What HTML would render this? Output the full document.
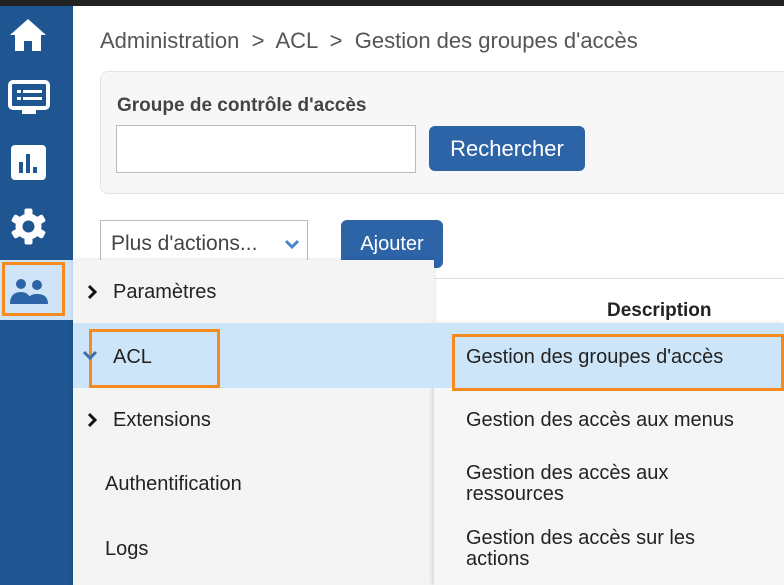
<!DOCTYPE html>
<html><head><meta charset="utf-8"><style>
*{box-sizing:border-box;margin:0;padding:0}
body{width:784px;height:585px;overflow:hidden;background:#fff;font-family:"Liberation Sans",sans-serif;position:relative;color:#222}
.a{position:absolute}
.side{left:0;top:6px;width:73px;height:579px;background:#1f5590}
.t{font-size:20px;white-space:nowrap}
</style></head><body>
<div class="a" style="left:0;top:0;width:784px;height:6px;background:#222"></div>
<div class="a side"></div>
<svg class="a" style="left:9px;top:18px" width="38" height="34" viewBox="0 0 38 34"><path d="M19 1 L37 17 H32 V33 H23 V23 H15 V33 H6 V17 H1 Z" fill="#fff"/></svg>
<svg class="a" style="left:8px;top:80px" width="42" height="36" viewBox="0 0 42 36"><rect x="2" y="2" width="38" height="26" rx="3" fill="none" stroke="#fff" stroke-width="4"/><rect x="14" y="28" width="14" height="6" fill="#fff"/><rect x="9" y="10" width="4" height="3" fill="#fff"/><rect x="15" y="10" width="19" height="3" fill="#fff"/><rect x="9" y="17" width="4" height="3" fill="#fff"/><rect x="15" y="17" width="19" height="3" fill="#fff"/></svg>
<svg class="a" style="left:11px;top:145px" width="35" height="35" viewBox="0 0 35 35"><rect width="35" height="35" rx="4" fill="#fff"/><rect x="8" y="17" width="4" height="11" fill="#1f5590"/><rect x="15" y="9" width="4" height="19" fill="#1f5590"/><rect x="22" y="22" width="4" height="6" fill="#1f5590"/></svg>
<svg class="a" style="left:10px;top:208px" width="37" height="37" viewBox="-18.5 -18.5 37 37"><g fill="#fff"><circle r="13"/><rect x="-4" y="-18" width="8" height="36" rx="2"/><rect x="-4" y="-18" width="8" height="36" rx="2" transform="rotate(60)"/><rect x="-4" y="-18" width="8" height="36" rx="2" transform="rotate(120)"/></g><circle r="6" fill="#1f5590"/></svg>
<div class="a" style="left:0;top:260px;width:73px;height:60px;background:#cfe4f7"></div>
<div class="a" style="left:2px;top:262px;width:63px;height:54px;border:3px solid #f58a1f"></div>
<svg class="a" style="left:9px;top:276px" width="40" height="30" viewBox="0 0 40 30"><g fill="#2d64a8"><circle cx="12" cy="8" r="5"/><circle cx="28" cy="9" r="5"/><path d="M1 28 Q1 16 12 16 Q22 16 22 28Z"/><path d="M17 28 Q18 18 28 18 Q39 18 39 28Z"/></g></svg>

<div class="a t" style="left:100px;top:28px;font-size:22px;color:#555">Administration &nbsp;&gt;&nbsp; ACL &nbsp;&gt;&nbsp; Gestion des groupes d'accès</div>
<div class="a" style="left:100px;top:71px;width:700px;height:123px;background:#f7f7f7;border:1px solid #e4e4e4;border-radius:8px"></div>
<div class="a" style="left:117px;top:95px;font-size:19px;font-weight:bold;color:#444">Groupe de contrôle d'accès</div>
<div class="a" style="left:116px;top:125px;width:300px;height:48px;background:#fff;border:1px solid #bbb"></div>
<div class="a" style="left:429px;top:126px;width:156px;height:45px;background:#2d64a8;border-radius:6px;color:#fff;font-size:22px;text-align:center;line-height:45px">Rechercher</div>
<div class="a" style="left:100px;top:220px;width:208px;height:46px;border:1px solid #bbb;background:#fff"></div>
<div class="a t" style="left:111px;top:232px;color:#444;font-size:21px">Plus d'actions...</div>
<svg class="a" style="left:284px;top:238px" width="16" height="12" viewBox="0 0 16 12"><path d="M2 3 L8 9 L14 3" fill="none" stroke="#4a86d0" stroke-width="3"/></svg>
<div class="a" style="left:341px;top:220px;width:102px;height:48px;background:#2d64a8;border-radius:6px;color:#fff;font-size:20px;text-align:center;line-height:48px">Ajouter</div>
<div class="a" style="left:434px;top:278px;width:350px;height:1px;background:#ddd"></div>
<div class="a" style="left:607px;top:300px;font-size:19px;font-weight:bold;color:#222">Description</div>

<div class="a" style="left:73px;top:260px;width:361px;height:325px;background:#f4f4f4;box-shadow:0 0 4px rgba(0,0,0,.15)"></div>
<div class="a" style="left:434px;top:323px;width:350px;height:262px;background:#f6f6f6;box-shadow:-2px 0 4px rgba(0,0,0,.12)"></div>
<div class="a" style="left:73px;top:323px;width:711px;height:65px;background:#cde5f8"></div>
<div class="a" style="left:89px;top:329px;width:131px;height:59px;border:3px solid #f58a1f"></div>
<div class="a" style="left:452px;top:334px;width:332px;height:57px;border:3px solid #f58a1f"></div>
<svg class="a" style="left:86px;top:284px" width="12" height="16" viewBox="0 0 12 16"><path d="M3 2 L9 8 L3 14" fill="none" stroke="#111" stroke-width="3"/></svg>
<div class="a t" style="left:113px;top:281px">Paramètres</div>
<svg class="a" style="left:82px;top:349px" width="16" height="12" viewBox="0 0 16 12"><path d="M2 3 L8 9 L14 3" fill="none" stroke="#3a6fb0" stroke-width="3"/></svg>
<div class="a t" style="left:113px;top:346px">ACL</div>
<svg class="a" style="left:86px;top:412px" width="12" height="16" viewBox="0 0 12 16"><path d="M3 2 L9 8 L3 14" fill="none" stroke="#111" stroke-width="3"/></svg>
<div class="a t" style="left:113px;top:409px">Extensions</div>
<div class="a t" style="left:105px;top:473px">Authentification</div>
<div class="a t" style="left:105px;top:538px">Logs</div>
<div class="a t" style="left:466px;top:346px">Gestion des groupes d'accès</div>
<div class="a t" style="left:466px;top:409px">Gestion des accès aux menus</div>
<div class="a t" style="left:466px;top:463px;line-height:21px">Gestion des accès aux<br>ressources</div>
<div class="a t" style="left:466px;top:528px;line-height:21px">Gestion des accès sur les<br>actions</div>
</body></html>
